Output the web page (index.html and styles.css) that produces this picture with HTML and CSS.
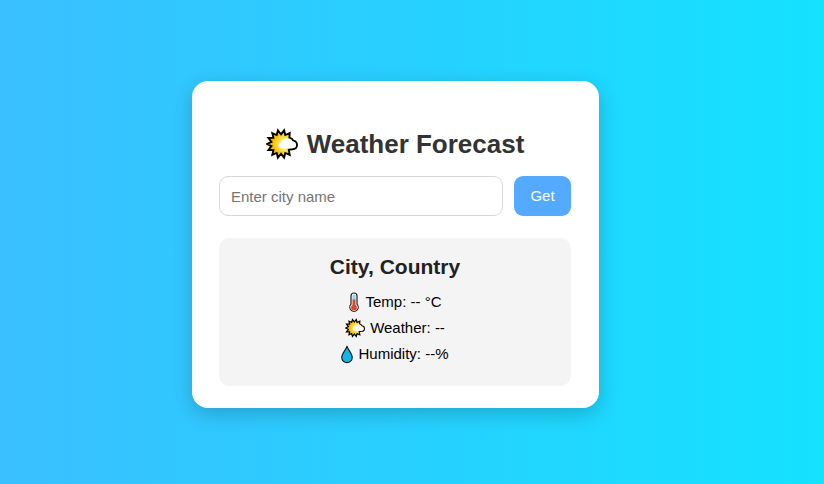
FILE: index.html
```html
<!DOCTYPE html>
<html lang="en">
<head>
<meta charset="utf-8">
<meta name="viewport" content="width=device-width, initial-scale=1">
<title>Weather Forecast</title>
<link rel="stylesheet" href="styles.css">
</head>
<body>
<svg class="defs" aria-hidden="true">
  <defs>
    <radialGradient id="glow" gradientUnits="userSpaceOnUse" cx="19" cy="16" r="15">
      <stop offset="0.25" stop-color="#fff3a0"/>
      <stop offset="0.55" stop-color="#ffd52b"/>
      <stop offset="0.9" stop-color="#f5b000"/>
    </radialGradient>
    <symbol id="sun" viewBox="0 0 32 32">
      <path fill="url(#glow)" stroke="#000" stroke-width="1.9" stroke-linejoin="miter" d="M15 6.3 18.1 2.4 19.3 7 23.7 5.1 23.4 9.6C25.2 9.9 26.6 11 27.2 12.6C29.6 13 31 14.8 31 17C31 19.6 29 21.2 26.3 21.2L22.8 21.7 23.7 26.9 19.3 25 18.1 29.6 15 25.7 11.9 29.6 10.7 25 6.3 26.9 7.4 22.1 2.4 22.1 5.4 18.2 1 16 5.4 13.8 2.4 9.9 7.4 9.9 6.3 5.1 10.7 7 11.9 2.4Z"/>
      <path fill="#fff" d="M15.5 20.3C11.5 20.3 11.3 15 15.3 14.7C16.2 10.4 24.5 8.7 26.4 13.3C28.6 13.6 30 15 30 17C30 19.2 28.5 20.3 26.3 20.3Z"/>
    </symbol>
  </defs>
</svg>
<main class="card">
  <h1 class="title"><svg class="icon-title" aria-hidden="true"><use href="#sun"/></svg>Weather Forecast</h1>
  <form class="search">
    <input class="city-input" type="text" placeholder="Enter city name" aria-label="City name">
    <button class="get" type="button">Get</button>
  </form>
  <section class="result">
    <h2 class="place">City, Country</h2>
    <p class="reading">
      <svg class="icon-narrow" viewBox="0 0 11 20" aria-hidden="true">
        <path d="M2.5 4a3 3 0 0 1 6 0v8.2a4.2 4.2 0 1 1-6 0z" fill="#f4f8fa" stroke="#222" stroke-width="1.2"/>
        <path d="M4 4a1.5 1.5 0 0 1 3 0v4H4z" fill="#8fd4ee"/>
        <path d="M4 7.5h3v5.6a2.9 2.9 0 1 1-3 0z" fill="#df4528"/>
      </svg>
      Temp: -- °C
    </p>
    <p class="reading"><svg class="icon-wide" aria-hidden="true"><use href="#sun"/></svg>Weather: --</p>
    <p class="reading">
      <svg class="icon-narrow" viewBox="0 0 13 20" preserveAspectRatio="none" aria-hidden="true">
        <path d="M6.5 2.2C7.8 6 12.2 9.6 12.2 13.4a5.7 5.3 0 0 1-11.4 0C.8 9.6 5.2 6 6.5 2.2z" fill="#14b4e6" stroke="#1a1a1a" stroke-width="1.2" stroke-linejoin="round"/>
      </svg>
      Humidity: --%
    </p>
  </section>
</main>
</body>
</html>
```
FILE: styles.css
```css
* {
  box-sizing: border-box;
}

body {
  margin: 0;
  min-height: 100vh;
  padding: 5px 33px 0 0;
  display: flex;
  justify-content: center;
  align-items: center;
  background: linear-gradient(to right, #3abfff, #14e2ff);
  font: 15px/26px Arial, "Liberation Sans", sans-serif;
  color: #000;
}

.defs {
  position: absolute;
  width: 0;
  height: 0;
}

.card {
  width: 100%;
  max-width: 407px;
  padding: 47px 28px 22px 27px;
  border-radius: 16px;
  background: #fff;
  box-shadow: 0 6px 20px rgba(0, 0, 0, 0.2);
}

.title {
  display: flex;
  justify-content: center;
  align-items: center;
  gap: 9px;
  margin: 0 0 16px;
  font-size: 26px;
  line-height: 32px;
  color: #333;
}

.icon-title {
  width: 32px;
  height: 32px;
}

.search {
  display: flex;
  gap: 11px;
  margin-bottom: 22px;
}

.city-input {
  flex: 1;
  min-width: 0;
  height: 40px;
  padding: 0 11px;
  border: 1px solid #d8d8d8;
  border-radius: 9px;
  background: #fff;
  font: inherit;
}

.city-input::placeholder {
  color: #757575;
}

.get {
  min-width: 57px;
  height: 40px;
  padding: 0 16px;
  border: 0;
  border-radius: 9px;
  background: #53aaff;
  color: #fff;
  font: inherit;
  cursor: pointer;
}

.result {
  padding: 17px 17px 19px;
  border-radius: 11px;
  background: #f4f4f4;
  text-align: center;
}

.place {
  margin: 0 0 10px;
  font-size: 21px;
  line-height: 24px;
  color: #222;
}

.reading {
  display: flex;
  justify-content: center;
  align-items: center;
  gap: 5px;
  margin: 0;
}

.icon-narrow {
  width: 12px;
  height: 20px;
}

.icon-wide {
  width: 20px;
  height: 20px;
}
```
